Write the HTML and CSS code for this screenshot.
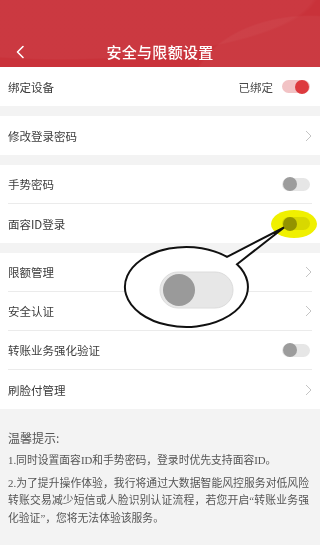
FILE: index.html
```html
<!DOCTYPE html>
<html lang="zh-CN">
<head>
<meta charset="utf-8">
<title>安全与限额设置</title>
<link rel="stylesheet" href="styles.css">
</head>
<body>
<div class="page">
  <header class="topbar">
    <div class="nav">
      <svg class="back" width="12" height="14" viewBox="0 0 12 14"><polyline points="9,1.5 3.5,7 9,12.5" fill="none" stroke="#fff" stroke-width="1.6" stroke-linecap="round" stroke-linejoin="round"/></svg>
      <h1 class="title">安全与限额设置</h1>
    </div>
  </header>

  <section class="group">
    <div class="row">
      <span class="label">绑定设备</span>
      <span class="right"><span class="state">已绑定</span><span class="switch on"></span></span>
    </div>
  </section>

  <section class="group">
    <div class="row">
      <span class="label">修改登录密码</span>
      <svg class="chev" width="7" height="12" viewBox="0 0 7 12"><polyline points="1,1 6,6 1,11" fill="none" stroke="#c4c4c4" stroke-width="1"/></svg>
    </div>
  </section>

  <section class="group">
    <div class="row">
      <span class="label">手势密码</span>
      <span class="switch"></span>
    </div>
    <div class="row">
      <span class="label">面容ID登录</span>
      <span class="switch"></span>
    </div>
  </section>

  <section class="group">
    <div class="row">
      <span class="label">限额管理</span>
      <svg class="chev" width="7" height="12" viewBox="0 0 7 12"><polyline points="1,1 6,6 1,11" fill="none" stroke="#c4c4c4" stroke-width="1"/></svg>
    </div>
    <div class="row">
      <span class="label">安全认证</span>
      <svg class="chev" width="7" height="12" viewBox="0 0 7 12"><polyline points="1,1 6,6 1,11" fill="none" stroke="#c4c4c4" stroke-width="1"/></svg>
    </div>
    <div class="row">
      <span class="label">转账业务强化验证</span>
      <span class="switch"></span>
    </div>
    <div class="row">
      <span class="label">刷脸付管理</span>
      <svg class="chev" width="7" height="12" viewBox="0 0 7 12"><polyline points="1,1 6,6 1,11" fill="none" stroke="#c4c4c4" stroke-width="1"/></svg>
    </div>
  </section>

  <div class="tips">
    <p class="tips-title">温馨提示:</p>
    <p class="tip">1.同时设置面容ID和手势密码，登录时优先支持面容ID。</p>
    <p class="tip">2.为了提升操作体验，我行将通过大数据智能风控服务对低风险转账交易减少短信或人脸识别认证流程，若您开启“转账业务强化验证”，您将无法体验该服务。</p>
  </div>

  <span class="highlight"></span>

  <svg class="callout" width="320" height="545" viewBox="0 0 320 545">
    <path d="M227 256.9 L284 227.5 L237 264.2 A61.5 40 0 1 1 227 256.9 Z" fill="#fff" stroke="#111" stroke-width="2" stroke-linejoin="miter"/>
    <rect x="160" y="272" width="73" height="36" rx="18" fill="#e7e7e7" stroke="#dcdcdc" stroke-width="1"/>
    <circle cx="179" cy="290" r="16" fill="#9a9a9a"/>
  </svg>
</div>
</body>
</html>
```

FILE: styles.css
```css
* { box-sizing: border-box; }
html, body { margin: 0; padding: 0; }
body {
  background: #f3f3f3;
  font-family: "Noto Sans CJK SC", "Noto Sans", sans-serif;
  color: #3a3a3a;
}
.page {
  position: relative;
  width: 320px;
  height: 545px;
  overflow: hidden;
  background: #f3f3f3;
}
.topbar {
  height: 67px;
  padding-top: 37px;
  background:
    radial-gradient(ellipse 120px 80px at 310px 95px, rgba(255,255,255,0.04) 0 98%, transparent 100%),
    radial-gradient(ellipse 260px 70px at 60px -10px, rgba(255,255,255,0.035) 0 98%, transparent 100%),
    #c9323a;
}
.nav {
  position: relative;
  height: 28px;
  display: flex;
  align-items: center;
  justify-content: center;
}
.back {
  position: absolute;
  left: 14px;
  top: 8px;
}
.title {
  margin: 0;
  font-size: 15px;
  font-weight: 500;
  color: #fff;
  letter-spacing: 0.3px;
}
.group {
  background: #fff;
  margin-bottom: 10px;
}
.group:last-of-type { margin-bottom: 0; }
.row {
  height: 39px;
  margin: 0 8px;
  display: flex;
  align-items: center;
  justify-content: space-between;
  border-bottom: 1px solid #ebebeb;
}
.row:last-child { border-bottom: none; }
.label {
  font-size: 11.5px;
  color: #3c3c3c;
}
.right {
  display: flex;
  align-items: center;
  gap: 9px;
}
.state {
  font-size: 11.5px;
  color: #4a4a4a;
}
.switch {
  position: relative;
  width: 28px;
  height: 13px;
  border-radius: 7px;
  background: #e6e6e6;
  margin-right: 2px;
}
.switch::after {
  content: "";
  position: absolute;
  left: 1px;
  top: -0.5px;
  width: 14px;
  height: 14px;
  border-radius: 50%;
  background: #9c9c9c;
}
.switch.on { background: #f2c3c5; }
.switch.on::after {
  left: auto;
  right: 1px;
  background: #dd3a3e;
}
.tips {
  padding: 20px 11px 0 8px;
  color: #555;
}
.tips-title {
  margin: 0 0 5px;
  font-size: 12px;
  line-height: 18px;
}
.tip {
  margin: 0 0 5px;
  font-family: "Liberation Serif", "Noto Sans CJK SC", serif;
  font-size: 10.8px;
  line-height: 17.5px;
  text-align: justify;
}
.highlight {
  position: absolute;
  left: 271px;
  top: 210px;
  width: 46px;
  height: 28px;
  border-radius: 50%;
  background: #f0f000;
  mix-blend-mode: multiply;
}
.callout {
  position: absolute;
  left: 0;
  top: 0;
  pointer-events: none;
}
```
